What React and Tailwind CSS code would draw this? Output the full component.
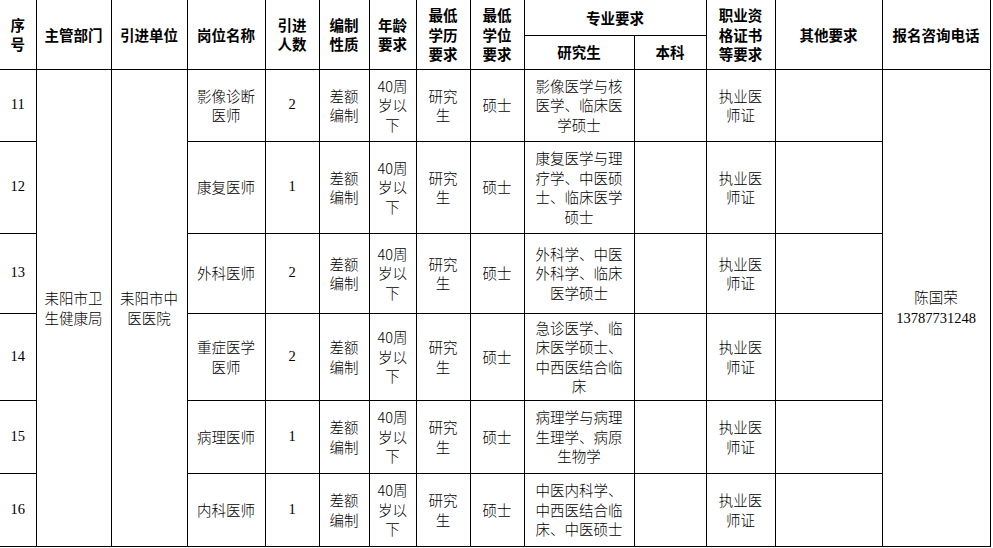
import React from "react";

const cjk = '"Noto Sans CJK SC", "Noto Sans", sans-serif';
const serif = '"Liberation Serif", "Noto Sans CJK SC", serif';

const rows = [
  { no: "11", name: ["影像诊断", "医师"], n: "2", major: ["影像医学与核", "医学、临床医", "学硕士"], h: "h-[72px]" },
  { no: "12", name: ["康复医师"], n: "1", major: ["康复医学与理", "疗学、中医硕", "士、临床医学", "硕士"], h: "h-[92px]" },
  { no: "13", name: ["外科医师"], n: "2", major: ["外科学、中医", "外科学、临床", "医学硕士"], h: "h-[80px]" },
  { no: "14", name: ["重症医学", "医师"], n: "2", major: ["急诊医学、临", "床医学硕士、", "中西医结合临", "床"], h: "h-[87px]" },
  { no: "15", name: ["病理医师"], n: "1", major: ["病理学与病理", "生理学、病原", "生物学"], h: "h-[73px]" },
  { no: "16", name: ["内科医师"], n: "1", major: ["中医内科学、", "中西医结合临", "床、中医硕士"], h: "h-[73px]" },
];

function Lines({ items }) {
  return items.map((t, i) => (
    <React.Fragment key={i}>
      {i > 0 && <br />}
      {t}
    </React.Fragment>
  ));
}

const th = "border-[1.5px] border-black text-center align-middle font-bold p-0";
const td = "border-[1.5px] border-black text-center align-middle font-light p-0";

export default function App() {
  return (
    <div className="w-[993px] h-[548px] bg-white overflow-hidden text-black" style={{ fontFamily: cjk }}>
      <table className="table-fixed border-collapse w-[990px] text-[14.5px] leading-[19.5px]">
        <colgroup>
          <col className="w-[36px]" />
          <col className="w-[75px]" />
          <col className="w-[76px]" />
          <col className="w-[78px]" />
          <col className="w-[54px]" />
          <col className="w-[50px]" />
          <col className="w-[47px]" />
          <col className="w-[54px]" />
          <col className="w-[54px]" />
          <col className="w-[110px]" />
          <col className="w-[72px]" />
          <col className="w-[69px]" />
          <col className="w-[107px]" />
          <col className="w-[108px]" />
        </colgroup>
        <thead>
          <tr className="h-[35px]">
            <th rowSpan={2} className={`${th} border-l-0 border-t-0`}>序<br />号</th>
            <th rowSpan={2} className={`${th} border-t-0`}>主管部门</th>
            <th rowSpan={2} className={`${th} border-t-0`}>引进单位</th>
            <th rowSpan={2} className={`${th} border-t-0`}>岗位名称</th>
            <th rowSpan={2} className={`${th} border-t-0`}>引进<br />人数</th>
            <th rowSpan={2} className={`${th} border-t-0`}>编制<br />性质</th>
            <th rowSpan={2} className={`${th} border-t-0`}>年龄<br />要求</th>
            <th rowSpan={2} className={`${th} border-t-0`}>最低<br />学历<br />要求</th>
            <th rowSpan={2} className={`${th} border-t-0`}>最低<br />学位<br />要求</th>
            <th colSpan={2} className={`${th} border-t-0`}>专业要求</th>
            <th rowSpan={2} className={`${th} border-t-0`}>职业资<br />格证书<br />等要求</th>
            <th rowSpan={2} className={`${th} border-t-0`}>其他要求</th>
            <th rowSpan={2} className={`${th} border-t-0`}>报名咨询电话</th>
          </tr>
          <tr className="h-[34px]">
            <th className={th}>研究生</th>
            <th className={th}>本科</th>
          </tr>
        </thead>
        <tbody>
          {rows.map((r, i) => (
            <tr key={r.no} className={r.h}>
              <td className={`${td} border-l-0 font-normal`} style={{ fontFamily: serif }}>{r.no}</td>
              {i === 0 && (
                <>
                  <td rowSpan={6} className={td}>耒阳市卫<br />生健康局</td>
                  <td rowSpan={6} className={td}>耒阳市中<br />医医院</td>
                </>
              )}
              <td className={td}><Lines items={r.name} /></td>
              <td className={`${td} font-normal`} style={{ fontFamily: serif }}>{r.n}</td>
              <td className={td}>差额<br />编制</td>
              <td className={td}>40周<br />岁以<br />下</td>
              <td className={td}>研究<br />生</td>
              <td className={td}>硕士</td>
              <td className={td}><Lines items={r.major} /></td>
              <td className={td}></td>
              <td className={td}>执业医<br />师证</td>
              <td className={td}></td>
              {i === 0 && (
                <td rowSpan={6} className={td}>
                  陈国荣<br />
                  <span className="font-normal" style={{ fontFamily: serif }}>13787731248</span>
                </td>
              )}
            </tr>
          ))}
        </tbody>
      </table>
    </div>
  );
}
